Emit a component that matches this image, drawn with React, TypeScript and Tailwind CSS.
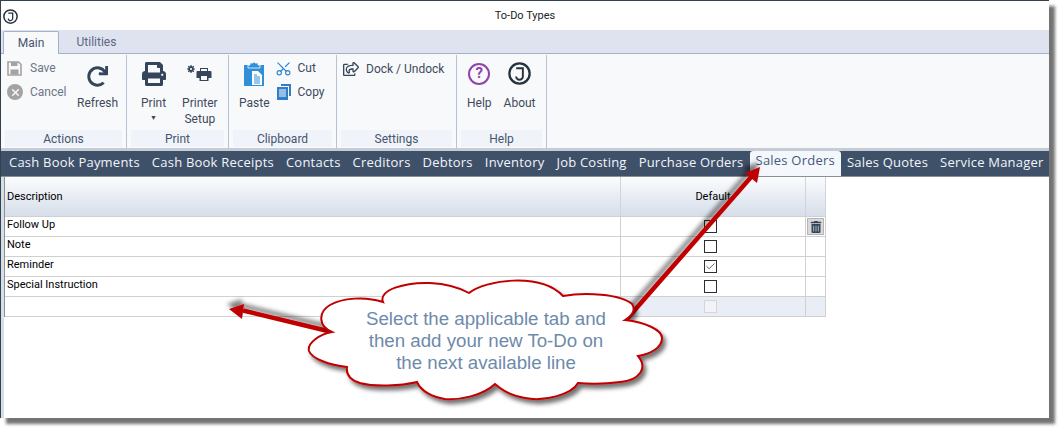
import { FaPrint, FaRedo, FaRegShareSquare, FaTrashAlt } from 'react-icons/fa';
import { Scissors, X, Check } from 'lucide-react';

const tabs = [
  'Cash Book Payments',
  'Cash Book Receipts',
  'Contacts',
  'Creditors',
  'Debtors',
  'Inventory',
  'Job Costing',
  'Purchase Orders',
  'Sales Orders',
  'Sales Quotes',
  'Service Manager',
];

const rows = [
  { label: 'Follow Up', checked: false, trash: true },
  { label: 'Note', checked: false },
  { label: 'Reminder', checked: true },
  { label: 'Special Instruction', checked: false },
];

function JLogo({ size }: { size: number }) {
  return (
    <svg width={size} height={size} viewBox="0 0 24 24" fill="none" stroke="#26333f">
      <circle cx="12" cy="12" r="10.6" strokeWidth="2.4" />
      <path d="M8.5 6.5h7v8.5a3.5 3.5 0 0 1-7 0" strokeWidth="2" />
    </svg>
  );
}

function SaveIcon() {
  return (
    <svg width="15" height="15" viewBox="0 0 15 15">
      <path d="M1 1h10.5L14 3.5V14H1z" fill="none" stroke="#a3a3a3" strokeWidth="1.6" />
      <rect x="4" y="1" width="6.5" height="4" fill="#a3a3a3" />
      <rect x="3.5" y="8.5" width="8" height="5" fill="#a3a3a3" />
    </svg>
  );
}

function PasteIcon() {
  return (
    <svg width="22" height="25" viewBox="0 0 22 25">
      <path d="M1 4h20v21H1z" fill="#2f8fd8" />
      <path d="M7 4V2h3a1 1 0 0 1 2 0h3v2h2v3H5V4z" fill="#2f8fd8" stroke="#f8f9fb" strokeWidth="0.8" />
      <path d="M9 10h6l4 4v10H9z" fill="#fff" />
      <path d="M11 14h3M11 16h6M11 18h6M11 20h6M11 22h6" stroke="#2f8fd8" strokeWidth="1" />
    </svg>
  );
}

function CopyIcon() {
  return (
    <svg width="14" height="16" viewBox="0 0 14 16">
      <path d="M4 0h10v12h-2V2H4z" fill="#2f7fc8" />
      <path d="M0 3h11v13H0z" fill="#2f7fc8" />
      <path d="M2 6h7M2 8h7M2 10h7M2 12h7" stroke="#fff" strokeWidth="1" />
    </svg>
  );
}

function PrinterSetupIcon() {
  return (
    <svg width="25" height="17" viewBox="0 0 25 17">
      <circle cx="4" cy="4" r="2" fill="#f8f9fb" stroke="#35465c" strokeWidth="1.8" />
      <path d="M4 0v2M4 6v2M0 4h2M6 4h2M1.2 1.2l1.4 1.4M5.4 5.4l1.4 1.4M6.8 1.2L5.4 2.6M2.6 5.4L1.2 6.8" stroke="#35465c" strokeWidth="1.2" />
      <path d="M13 6V3h8v3h2.5a1 1 0 0 1 1 1v6h-3v3h-9v-3h-3V7a1 1 0 0 1 1-1z" fill="#35465c" />
      <path d="M14 11h6v4h-6zM14 4h6v2h-6z" fill="#f8f9fb" />
    </svg>
  );
}

function HelpIcon() {
  return (
    <span className="flex h-[22px] w-[22px] items-center justify-center rounded-full border-2 border-[#8e44ad] text-[15px] leading-none font-bold text-[#8e44ad]">
      ?
    </span>
  );
}

function Box({ checked, disabled }: { checked?: boolean; disabled?: boolean }) {
  return (
    <span
      className={`mr-[5px] mb-[1px] flex h-[13px] w-[13px] items-center justify-center border ${
        disabled ? 'border-[#d4d6da] bg-[#f1f3f7]' : 'border-[#2e2e2e] bg-white'
      }`}
    >
      {checked && <Check size={11} strokeWidth={2} color="#555" />}
    </span>
  );
}

function GroupLabel({ children }: { children: string }) {
  return (
    <div className="mx-[4px] mt-auto mb-[1px] flex h-[17px] items-center justify-center bg-[#f0f3f9] text-[12px] text-[#46556f]">
      {children}
    </div>
  );
}

function BigButton({ icon, label }: { icon: React.ReactNode; label: React.ReactNode }) {
  return (
    <div className="flex flex-col items-center">
      <div className="mb-[4px] flex h-[35px] items-center justify-center">{icon}</div>
      <div className="text-center text-[12px] leading-[16px] text-[#3e4a5c]">{label}</div>
    </div>
  );
}

function Overlay() {
  return (
    <svg className="absolute top-0 left-0" width="1064" height="432" viewBox="0 0 1064 432">
      <defs>
        <filter id="sh" x="-20%" y="-20%" width="140%" height="140%">
          <feDropShadow dx="3" dy="4" stdDeviation="2" floodColor="#000" floodOpacity="0.55" />
        </filter>
        {/* the arrows throw their shadow up and to the left */}
        <filter id="arrowSh" x="-20%" y="-30%" width="140%" height="160%">
          <feDropShadow dx="-2" dy="-5" stdDeviation="2.2" floodColor="#000" floodOpacity="0.5" />
        </filter>
      </defs>
      <g filter="url(#arrowSh)">
        <path d="M332 332 L243 310.5" stroke="#c00000" strokeWidth="4.5" />
        <path d="M229 309 L244 304 L242 319 Z" fill="#c00000" />
      </g>
      <g filter="url(#arrowSh)">
        <path d="M626 320 L752 176" stroke="#c00000" strokeWidth="4.5" />
        <path d="M760 167 L745 173 L757 183 Z" fill="#c00000" />
      </g>
      <path
        filter="url(#sh)"
        fill="#fff"
        stroke="#c00000"
        strokeWidth="2"
        d="M332 332 C318 326 318 312 330 305 C342 298 365 296 383 302
           C378 290 405 282 430 283 C448 284 460 288 469 293
           C485 280 540 272 563 296 C585 292 620 294 632 304 C636 310 632 316 625 320
           C645 322 662 330 662 338 C662 348 650 354 638 356
           C648 368 640 380 620 382 C605 384 590 384 578 383
           C572 394 545 402 525 398 C512 396 503 391 495 384
           C482 396 460 400 445 399 C432 397 421 391 417 382
           C400 386 375 387 360 383 C350 380 346 374 347 367
           C330 365 312 359 309 351 C307 343 320 334 332 332 Z"
      />
    </svg>
  );
}

export default function App() {
  return (
    <div className="relative h-[432px] w-[1064px] overflow-hidden bg-white font-['Roboto',sans-serif]">
      <div className="flex h-[418px] w-[1049px] flex-col border-t border-l border-[#34424f] bg-white shadow-[6px_6px_3px_rgba(0,0,0,0.55)]">
        {/* title bar */}
        <div className="relative flex h-[29px] items-center justify-center pt-[1px] text-[11px] text-[#222]">
          <span className="absolute top-[8px] left-[2px] flex">
            <JLogo size={15} />
          </span>
          To-Do Types
        </div>

        {/* ribbon tabs */}
        <div className="flex h-[24px] items-end border-b border-[#a3b2c9] bg-[#dfe3f0] pl-[2px] text-[12px]">
          <div className="relative top-[1px] flex h-[23px] w-[56px] items-center justify-center rounded-t-[2px] border border-b-0 border-[#a3b2c9] bg-[#f8f9fb] text-[#46556f]">
            Main
          </div>
          <div className="flex h-[23px] w-[75px] items-center justify-center text-[#5a6880]">Utilities</div>
        </div>

        {/* ribbon */}
        <div className="flex h-[94px] bg-[#f8f9fb] pt-[1px]">
          <div className="flex w-[126px] flex-col border-r border-[#b6c3d6]">
            <div className="flex pt-[5px] pl-[5px] text-[12px] text-[#6d7686]">
              <div className="flex w-[71px] flex-col gap-[8px]">
                <div className="flex h-[16px] items-center gap-[8px] pl-[1px]">
                  <SaveIcon />
                  <span>Save</span>
                </div>
                <div className="flex h-[16px] items-center gap-[7px] pl-[1px]">
                  <span className="flex h-[16px] w-[16px] items-center justify-center rounded-full bg-[#a3a3a3]">
                    <X size={11} strokeWidth={3.5} color="#f4f4f4" />
                  </span>
                  <span>Cancel</span>
                </div>
              </div>
              <div className="-mt-[4px]">
                <BigButton icon={<FaRedo size={21} color="#35465c" className="mt-[5px]" />} label="Refresh" />
              </div>
            </div>
            <GroupLabel>Actions</GroupLabel>
          </div>

          <div className="flex w-[102px] flex-col border-r border-[#b6c3d6]">
            <div className="flex gap-[16px] pt-[1px] pl-[14px]">
              <BigButton
                icon={<FaPrint size={24} color="#35465c" />}
                label={
                  <>
                    Print
                    <br />
                    <span className="relative -top-[3px] text-[7px]">▼</span>
                  </>
                }
              />
              <BigButton icon={<PrinterSetupIcon />} label={<>Printer<br />Setup</>} />
            </div>
            <GroupLabel>Print</GroupLabel>
          </div>

          <div className="flex w-[108px] flex-col border-r border-[#b6c3d6]">
            <div className="flex gap-[5px] pt-[1px] pl-[10px]">
              <BigButton icon={<PasteIcon />} label="Paste" />
              <div className="flex flex-col gap-[8px] pt-[4px] text-[12px] text-[#3e4a5c]">
                <div className="flex h-[16px] items-center gap-[6px]">
                  <Scissors size={17} strokeWidth={1.6} color="#2f86d0" className="-rotate-90" />
                  <span>Cut</span>
                </div>
                <div className="flex h-[16px] items-center gap-[7px] pl-[2px]">
                  <CopyIcon />
                  <span>Copy</span>
                </div>
              </div>
            </div>
            <GroupLabel>Clipboard</GroupLabel>
          </div>

          <div className="flex w-[120px] flex-col border-r border-[#b6c3d6]">
            <div className="flex h-[16px] items-center gap-[7px] pt-[12px] pl-[6px] text-[12px] text-[#3e4a5c]">
              <FaRegShareSquare size={16} color="#35465c" />
              <span>Dock / Undock</span>
            </div>
            <GroupLabel>Settings</GroupLabel>
          </div>

          <div className="flex w-[90px] flex-col border-r border-[#b6c3d6]">
            <div className="flex gap-[12px] pt-[1px] pl-[10px]">
              <BigButton icon={<HelpIcon />} label="Help" />
              <BigButton icon={<JLogo size={23} />} label="About" />
            </div>
            <GroupLabel>Help</GroupLabel>
          </div>
        </div>

        {/* module tabs */}
        <div className="h-[3px] bg-[#c6ccd6]" />
        <div className="flex h-[25px] items-stretch overflow-hidden bg-[#3f5069] pl-[2px] font-['Open_Sans',sans-serif] text-[13px] tracking-[0.22px] whitespace-nowrap text-[#f2f5fa]">
          {tabs.map((t) =>
            t === 'Sales Orders' ? (
              <div
                key={t}
                className="flex shrink-0 items-center rounded-t-[3px] bg-[#f4f8fd] px-[6px] pb-[5px] text-[#46597a]"
              >
                {t}
              </div>
            ) : (
              <div key={t} className="flex shrink-0 items-center px-[6px] pb-[1px]">
                {t}
              </div>
            ),
          )}
        </div>
        <div className="h-[1px] bg-[#8b8f96]" />

        {/* grid */}
        <div className="flex-1 border-l-[3px] border-[#d5dfe8] text-[11px] text-black">
          <div className="w-[822px] border-l border-[#8b8f96]">
            <div className="flex h-[40px] border-b border-[#d0d0d0] bg-gradient-to-b from-[#fbfcfd] to-[#d6deea]">
              <div className="flex w-[616px] items-center border-r border-[#d0d5dc] pt-[2px] pl-[2px]">Description</div>
              <div className="flex w-[185px] items-center justify-center border-r border-[#d0d5dc] pt-[2px]">Default</div>
              <div className="w-[20px] border-r border-[#d0d5dc]" />
            </div>
            {rows.map((r) => (
              <div key={r.label} className="flex h-[20px] border-b border-[#d0d0d0]">
                <div className="w-[616px] border-r border-[#d0d0d0] pl-[2px] leading-[15px]">{r.label}</div>
                <div className="flex w-[185px] items-center justify-center border-r border-[#d0d0d0]">
                  <Box checked={r.checked} />
                </div>
                <div className="flex w-[20px] items-center justify-center border-r border-[#d0d0d0]">
                  {r.trash && (
                    <span className="flex h-[17px] w-[17px] shrink-0 items-center justify-center border border-[#b5b5b5] bg-[#d9d9d9]">
                      <FaTrashAlt size={12} color="#35465c" />
                    </span>
                  )}
                </div>
              </div>
            ))}
            <div className="flex h-[20px] border-b border-[#d0d0d0]">
              <div className="w-[616px] border-r border-[#d0d0d0]" />
              <div className="flex w-[185px] items-center justify-center border-r border-[#d0d0d0] bg-[#e9eef6]">
                <Box disabled />
              </div>
              <div className="w-[20px] border-r border-[#d0d0d0] bg-[#e9eef6]" />
            </div>
          </div>
        </div>
      </div>

      <Overlay />

      {/* callout text */}
      <div className="absolute top-[308px] left-[345px] w-[282px] text-center font-['Liberation_Sans',sans-serif] text-[18.7px] leading-[22px] text-[#6e8aab]">
        Select the applicable tab and
        <br />
        then add your new To-Do on
        <br />
        the next available line
      </div>
    </div>
  );
}
